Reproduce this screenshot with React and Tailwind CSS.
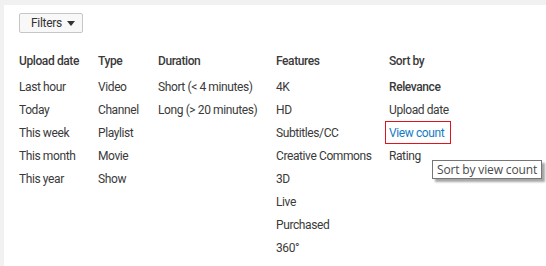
import React from "react";

const cols = [
  { title: "Upload date", w: "w-[79px]", items: ["Last hour", "Today", "This week", "This month", "This year"] },
  { title: "Type", w: "w-[60px]", items: ["Video", "Channel", "Playlist", "Movie", "Show"] },
  { title: "Duration", w: "w-[118px]", items: ["Short (< 4 minutes)", "Long (> 20 minutes)"] },
  { title: "Features", w: "w-[113px]", items: ["4K", "HD", "Subtitles/CC", "Creative Commons", "3D", "Live", "Purchased", "360°"] },
];

export default function App() {
  return (
    <div className="w-[546px] h-[266px] bg-[#f1f1f1] pl-[4px] pt-[5px] overflow-hidden" style={{ fontFamily: "Roboto, Arial, sans-serif" }}>
      <div className="bg-white h-full w-full relative">
        <div className="pl-[15px] pt-[8px]">
          <button className="flex items-center h-[20px] w-[64px] pl-[11px] border border-[#c6c6c6] rounded-[2px] bg-[#f8f8f8] text-[#333] text-[12px] tracking-[-0.3px]">
            <span>Filters</span>
            <svg width="8" height="5" viewBox="0 0 8 5" className="ml-[5px] mt-[1px]"><path d="M0 0h8L4 5z" fill="#333" /></svg>
          </button>
        </div>
        <div className="flex pl-[15px] mt-[17px] text-[12px] tracking-[-0.4px] text-[#3a3a3a]">
          {cols.map((c) => (
            <div key={c.title} className={c.w + " shrink-0"}>
              <div className="h-[23px] leading-[23px] mb-[3px] font-medium whitespace-nowrap">{c.title}</div>
              {c.items.map((it) => (
                <div key={it} className="h-[23px] leading-[23px] whitespace-nowrap">{it}</div>
              ))}
            </div>
          ))}
          <div className="shrink-0">
            <div className="h-[23px] leading-[23px] mb-[3px] font-medium">Sort by</div>
            <div className="h-[23px] leading-[23px] font-medium">Relevance</div>
            <div className="h-[23px] leading-[23px]">Upload date</div>
            <div className="h-[23px] leading-[23px] relative text-[#167ac6]">
              View count
              <div className="absolute -left-[4px] -top-[1px] w-[66px] h-[23px] border border-[#e0141e]"></div>
            </div>
            <div className="h-[23px] leading-[23px]">Rating</div>
          </div>
        </div>
        <div
          className="absolute left-[428px] top-[155px] w-[110px] h-[19px] bg-white border border-[#767676] text-[#4a4a4a] text-[12px] tracking-[-0.15px] leading-[17px] pl-[4px] shadow-[3px_3px_2px_rgba(0,0,0,0.35)] whitespace-nowrap"
          style={{ fontFamily: "'Open Sans', sans-serif" }}
        >
          Sort by view count
        </div>
      </div>
    </div>
  );
}
